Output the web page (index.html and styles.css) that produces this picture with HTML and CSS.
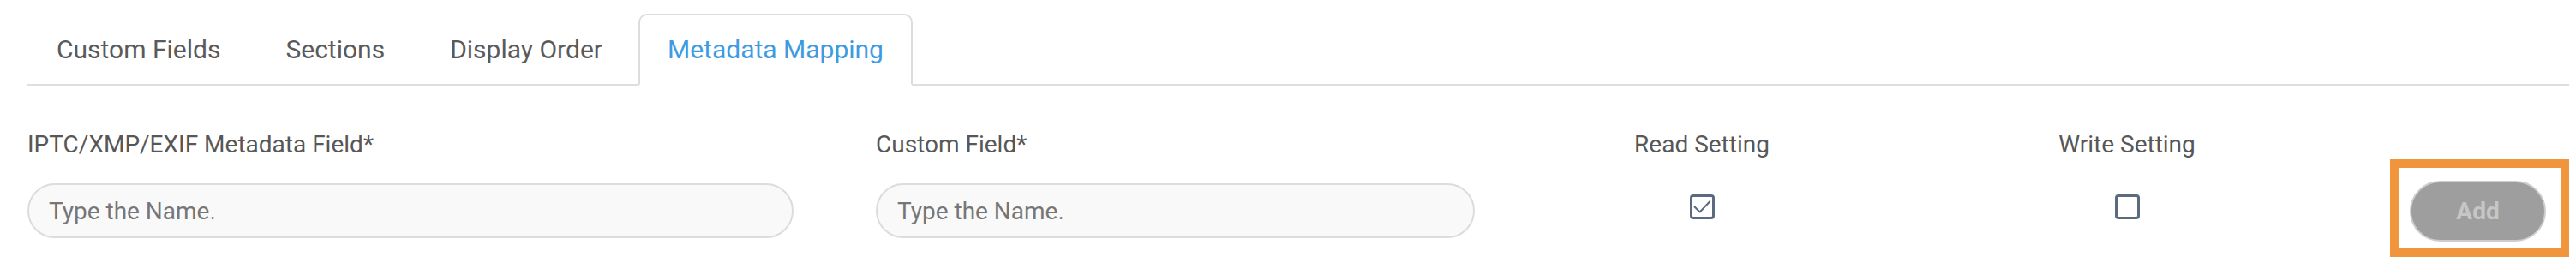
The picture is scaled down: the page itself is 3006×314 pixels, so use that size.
FILE: index.html
```html
<!DOCTYPE html>
<html lang="en">
<head>
<meta charset="utf-8">
<title>Metadata Mapping</title>
<link rel="stylesheet" href="styles.css">
</head>
<body>
<div class="page">
  <nav class="tabs">
    <a class="tab">Custom Fields</a>
    <a class="tab">Sections</a>
    <a class="tab">Display Order</a>
    <a class="tab active">Metadata Mapping</a>
  </nav>
  <div class="form-row">
    <div class="col col-meta">
      <label class="label">IPTC/XMP/EXIF Metadata Field*</label>
      <input class="text-input" type="text" placeholder="Type the Name.">
    </div>
    <div class="col col-custom">
      <label class="label">Custom Field*</label>
      <input class="text-input" type="text" placeholder="Type the Name.">
    </div>
    <div class="col col-check col-read">
      <span class="label">Read Setting</span>
      <span class="checkbox">
        <svg viewBox="0 0 29 29" width="29" height="29" aria-hidden="true"><path d="M5.5 14.5 L11.7 20.5 L23.3 8.3" fill="none" stroke="#5b6a7e" stroke-width="2" stroke-linecap="round" stroke-linejoin="round"/></svg>
      </span>
    </div>
    <div class="col col-check col-write">
      <span class="label">Write Setting</span>
      <span class="checkbox"></span>
    </div>
    <div class="highlight">
      <button class="add-btn" type="button" disabled>Add</button>
    </div>
  </div>
</div>
</body>
</html>
```
FILE: styles.css
```css
html, body {
  margin: 0;
  padding: 0;
  background: #ffffff;
}
body {
  font-family: Roboto, "Liberation Sans", Arial, sans-serif;
  width: 3006px;
  height: 314px;
  overflow: hidden;
}
.page {
  padding: 16px 8px 0 32px;
}
.tabs {
  display: flex;
  align-items: flex-end;
  gap: 8px;
  border-bottom: 2px solid #dedede;
}
.tab {
  display: block;
  padding: 22px 32px;
  font-size: 30px;
  line-height: 36px;
  color: #5a5a5a;
  border: 2px solid transparent;
  border-top-left-radius: 10px;
  border-top-right-radius: 10px;
  margin-bottom: -2px;
  white-space: nowrap;
}
.tab.active {
  color: #3f9be1;
  border-color: #dcdcdc #dcdcdc #ffffff #dcdcdc;
  background: #ffffff;
}
.form-row {
  display: flex;
  align-items: flex-start;
  margin-top: 52px;
}
.col {
  display: flex;
  flex-direction: column;
}
.col-meta {
  width: 894px;
  margin-right: 96px;
}
.col-custom {
  width: 699px;
}
.col-check {
  align-items: center;
}
.col-read {
  width: 530px;
}
.col-write {
  width: 462px;
  margin-right: 76px;
}
.label {
  display: block;
  font-size: 28px;
  line-height: 34px;
  color: #575757;
  white-space: nowrap;
}
.text-input {
  box-sizing: border-box;
  width: 100%;
  height: 64px;
  margin-top: 28px;
  padding: 0 23px;
  border: 2px solid #dcdcdc;
  border-radius: 32px;
  background: #f9f9f9;
  font-family: Roboto, "Liberation Sans", Arial, sans-serif;
  font-size: 28px;
  color: #555;
  outline: none;
}
.text-input::placeholder {
  color: #767676;
}
.checkbox {
  box-sizing: border-box;
  display: block;
  width: 29px;
  height: 29px;
  margin-top: 41px;
  border: 3px solid #5b6a7e;
  border-radius: 4px;
  background: #fff;
  position: relative;
}
.checkbox svg {
  position: absolute;
  left: -3px;
  top: -3px;
}
.highlight {
  box-sizing: border-box;
  width: 209px;
  height: 114px;
  margin-top: 34px;
  border: 10px solid #f0953b;
  padding: 15px 17px 8px 13px;
}
.add-btn {
  box-sizing: border-box;
  display: block;
  width: 159px;
  height: 71px;
  border: 2px solid #cdcdcd;
  border-radius: 36px;
  background: #9e9e9e;
  color: #c6c6c6;
  font-family: Roboto, "Liberation Sans", Arial, sans-serif;
  font-weight: 700;
  font-size: 28px;
  padding: 0;
}
```
